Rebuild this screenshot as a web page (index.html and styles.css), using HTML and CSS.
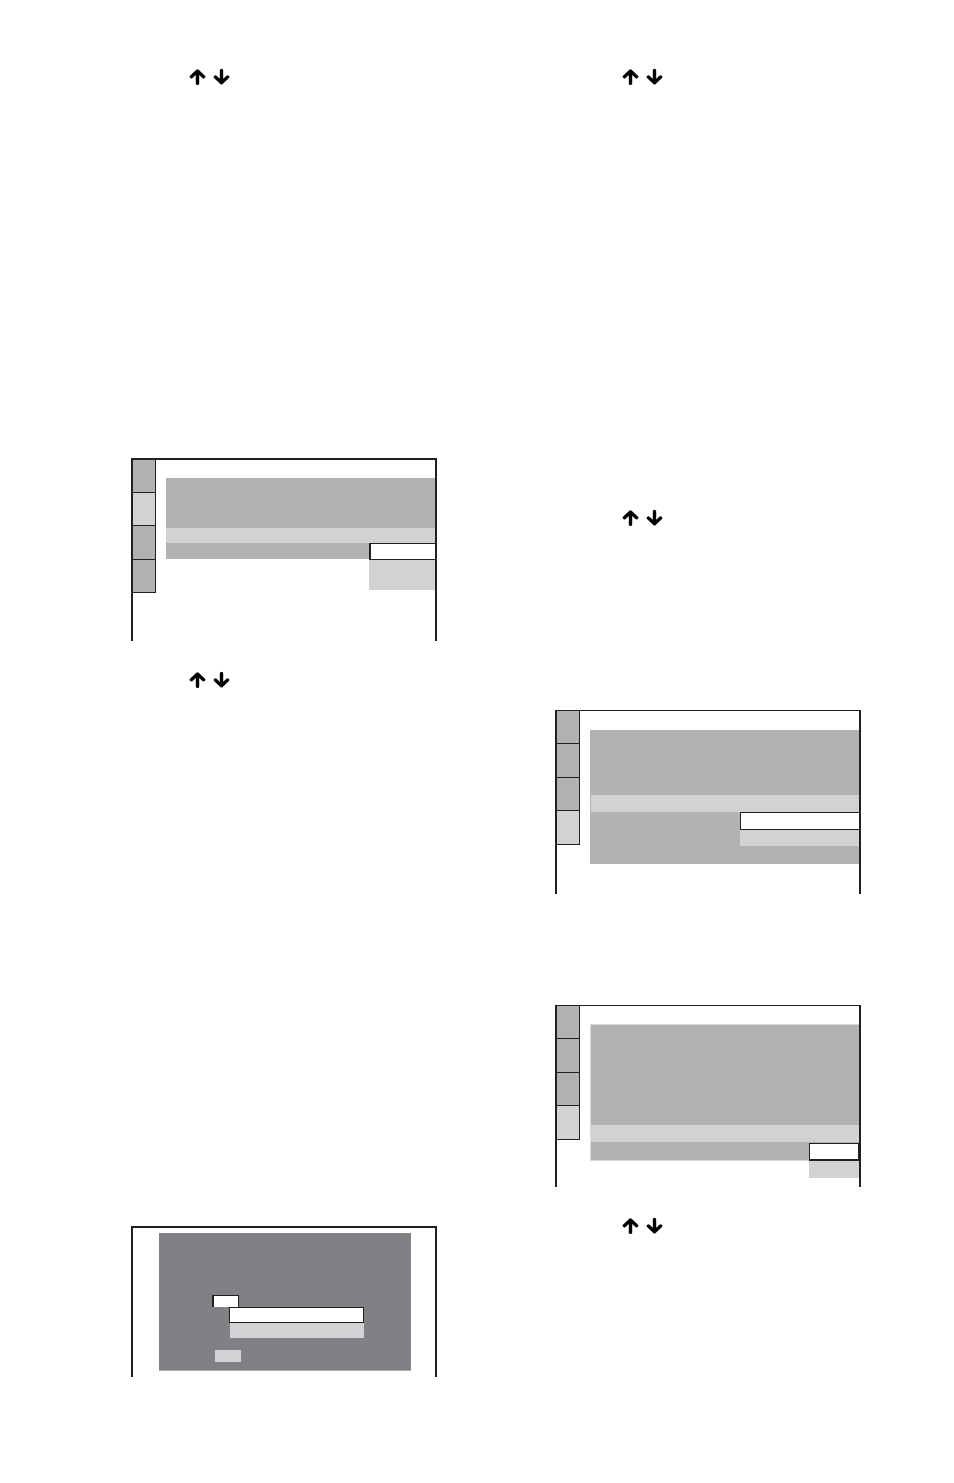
FILE: index.html
```html
<!DOCTYPE html>
<html lang="en">
<head>
  <meta charset="UTF-8">
  <meta name="viewport" content="width=device-width, initial-scale=1.0">
  <title>Setup menus</title>
  <link rel="stylesheet" href="styles.css">
</head>
<body>
  <svg class="sprite" aria-hidden="true">
    <symbol id="arrow-up" viewBox="0 0 17 18">
      <path d="M8.5 15.4V3.2M2.4 8.7L8.5 3l6.1 5.7"/>
    </symbol>
    <symbol id="arrow-down" viewBox="0 0 17 18">
      <path d="M8.5 2.4v12.2M2.4 9.1l6.1 5.7 6.1-5.7"/>
    </symbol>
  </svg>

  <main class="page">
    <section class="column column-left">
      <div class="arrows">
        <svg class="arrow"><use href="#arrow-up"/></svg>
        <svg class="arrow"><use href="#arrow-down"/></svg>
      </div>

      <div class="screen menu menu-video">
        <nav class="tabs">
          <button class="tab" aria-label="Tab 1"></button>
          <button class="tab active" aria-label="Tab 2"></button>
          <button class="tab" aria-label="Tab 3"></button>
          <button class="tab" aria-label="Tab 4"></button>
        </nav>
        <div class="panel">
          <div class="highlight"></div>
          <div class="options">
            <button class="option selected" aria-label="Option 1"></button>
            <button class="option" aria-label="Option 2"></button>
          </div>
        </div>
      </div>

      <div class="arrows arrows-after">
        <svg class="arrow"><use href="#arrow-up"/></svg>
        <svg class="arrow"><use href="#arrow-down"/></svg>
      </div>

      <div class="screen dialog">
        <div class="dialog-body">
          <button class="field" aria-label="Field"></button>
          <div class="dialog-options">
            <button class="option selected" aria-label="Option 1"></button>
            <button class="option" aria-label="Option 2"></button>
          </div>
          <button class="confirm" aria-label="Confirm"></button>
        </div>
      </div>
    </section>

    <section class="column column-right">
      <div class="arrows">
        <svg class="arrow"><use href="#arrow-up"/></svg>
        <svg class="arrow"><use href="#arrow-down"/></svg>
      </div>

      <div class="arrows arrows-middle">
        <svg class="arrow"><use href="#arrow-up"/></svg>
        <svg class="arrow"><use href="#arrow-down"/></svg>
      </div>

      <div class="screen menu menu-wide">
        <nav class="tabs">
          <button class="tab" aria-label="Tab 1"></button>
          <button class="tab" aria-label="Tab 2"></button>
          <button class="tab" aria-label="Tab 3"></button>
          <button class="tab active" aria-label="Tab 4"></button>
        </nav>
        <div class="panel">
          <div class="highlight"></div>
          <div class="options">
            <button class="option selected" aria-label="Option 1"></button>
            <button class="option" aria-label="Option 2"></button>
          </div>
        </div>
      </div>

      <div class="screen menu menu-short">
        <nav class="tabs">
          <button class="tab" aria-label="Tab 1"></button>
          <button class="tab" aria-label="Tab 2"></button>
          <button class="tab" aria-label="Tab 3"></button>
          <button class="tab active" aria-label="Tab 4"></button>
        </nav>
        <div class="panel">
          <div class="highlight"></div>
          <div class="options">
            <button class="option selected" aria-label="Option 1"></button>
            <button class="option" aria-label="Option 2"></button>
          </div>
        </div>
      </div>

      <div class="arrows arrows-after">
        <svg class="arrow"><use href="#arrow-up"/></svg>
        <svg class="arrow"><use href="#arrow-down"/></svg>
      </div>
    </section>
  </main>
</body>
</html>
```
FILE: styles.css
```css
* {
  box-sizing: border-box;
}
body {
  margin: 0;
  background-color: #fff;
  font-family: "Liberation Sans", Arial, sans-serif;
}
button {
  display: block;
  margin: 0;
  padding: 0;
  border: 0 solid #231f20;
  border-radius: 0;
  cursor: pointer;
}
.sprite {
  position: absolute;
  width: 0;
  height: 0;
}
.page {
  display: grid;
  grid-template-columns: 1fr 1fr;
  column-gap: 118px;
  padding: 68px 93px 106px 131px;
}

/* up / down arrows */
.arrows {
  display: flex;
  gap: 7px;
}
.column-left .arrows {
  padding-left: 58px;
}
.column-right .arrows {
  padding-left: 67px;
}
.arrow {
  display: block;
  width: 17px;
  height: 18px;
  fill: none;
  stroke: #000;
  stroke-width: 3.4;
  stroke-linecap: round;
  stroke-linejoin: round;
}
.arrows-middle {
  margin-top: 423px;
}
.arrows-after {
  margin-top: 30px;
}

/* menu screens, open at the bottom */
.screen {
  border: 2px solid #231f20;
  border-bottom: 0;
}
.menu {
  display: flex;
  align-items: flex-start;
}
.tabs {
  display: grid;
  grid-template-rows: 33px 34px 33px 34px;
  width: 23px;
}
.tab {
  background-color: #b1b2b4;
  border-width: 0 1px 1px 0;
}
.tab.active {
  background-color: #d1d2d4;
}
.panel {
  position: relative;
  flex: 1;
  margin: 19px 0 0 10px;
  background-color: #b1b2b4;
}
.highlight {
  height: 17px;
  background-color: #d1d2d4;
}
.options {
  position: absolute;
  top: 100%;
  right: 0;
}
.option {
  width: 100%;
  height: 17px;
  background-color: #d1d2d4;
}
.option.selected {
  height: 18px;
  background-color: #fff;
  border-width: 1px 0 1px 1px;
}

.menu-video {
  height: 183px;
  margin-top: 372px;
}
.menu-video .tabs {
  grid-template-rows: 33px 33px 34px 33px;
}
.menu-video .panel {
  margin-top: 18px;
  padding: 50px 0 16px;
}
.menu-video .highlight {
  height: 15px;
}
.menu-video .options {
  top: 65px;
  width: 66px;
}
.menu-video .option {
  height: 30px;
}
.menu-video .option.selected {
  height: 17px;
  border-left-width: 2px;
}

.menu-wide {
  height: 184px;
  margin-top: 183px;
  border-top-width: 1px;
}
.menu-wide .panel {
  padding: 65px 0 52px 1px;
}
.menu-wide .options {
  top: 82px;
  width: 119px;
}
.menu-wide .option:last-child {
  height: 16px;
}

.menu-short {
  height: 182px;
  margin-top: 111px;
  border-top-width: 1px;
}
.menu-short .panel {
  margin-top: 18px;
  padding: 100px 0 18px;
  border: 1px solid #d9dadb;
  border-right: 0;
}
.menu-short .options {
  top: 118px;
  width: 50px;
}
.menu-short .option.selected {
  border-width: 1px 1px 2px 1px;
}

/* dialog screen */
.dialog {
  height: 151px;
  margin-top: 537px;
  padding: 5px 24px 0 26px;
}
.dialog-body {
  height: 138px;
  padding: 62px 47px 0 53px;
  background-color: #808184;
  border-bottom: 1px solid #aeabad;
}
.field {
  width: 27px;
  height: 12px;
  background-color: #fff;
  border-width: 1px 1px 0 2px;
}
.dialog-options {
  margin-left: 17px;
}
.dialog-options .option {
  height: 15px;
  border-left: 1px solid #808184;
}
.dialog-options .option.selected {
  height: 16px;
  border: 1px solid #231f20;
}
.confirm {
  width: 26px;
  height: 12px;
  margin: 12px 0 0 3px;
  background-color: #d1d2d4;
}
```
